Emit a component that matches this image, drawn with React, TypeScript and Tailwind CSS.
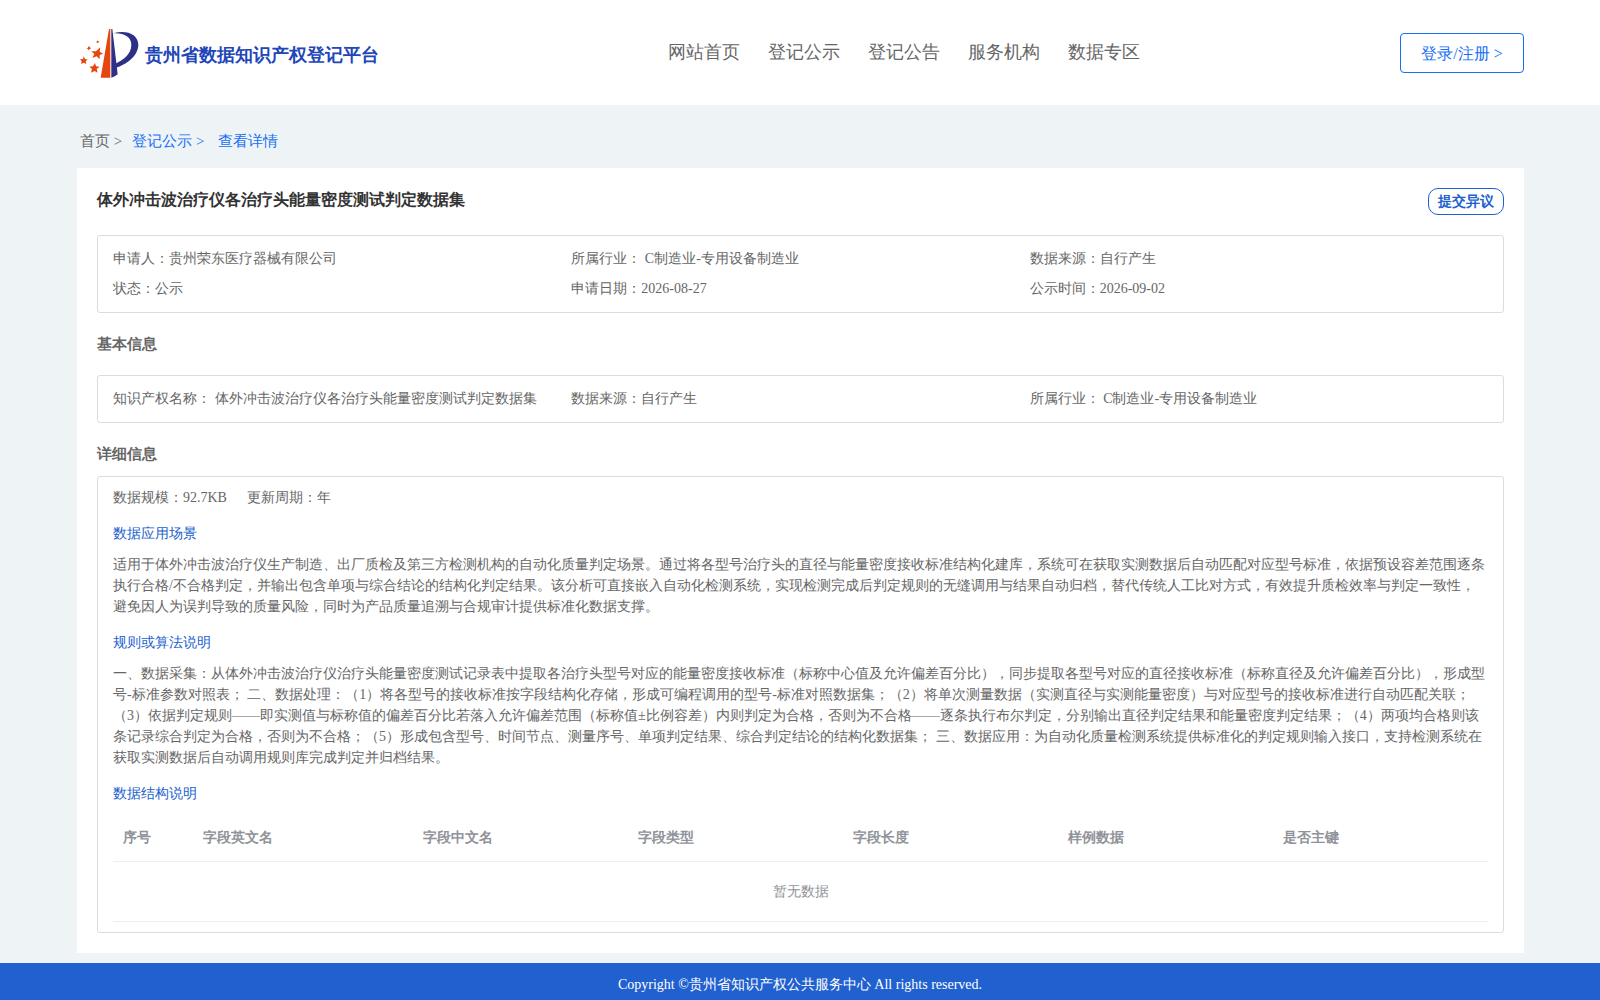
import React from 'react';

interface InfoItem {
  label: string;
  value: string;
}

const navItems = ['网站首页', '登记公示', '登记公告', '服务机构', '数据专区'];

const summary: InfoItem[] = [
  { label: '申请人：', value: '贵州荣东医疗器械有限公司' },
  { label: '所属行业： ', value: 'C制造业-专用设备制造业' },
  { label: '数据来源：', value: '自行产生' },
  { label: '状态：', value: '公示' },
  { label: '申请日期：', value: '2026-08-27' },
  { label: '公示时间：', value: '2026-09-02' },
];

const basicInfo: InfoItem[] = [
  { label: '知识产权名称： ', value: '体外冲击波治疗仪各治疗头能量密度测试判定数据集' },
  { label: '数据来源：', value: '自行产生' },
  { label: '所属行业： ', value: 'C制造业-专用设备制造业' },
];

const columns = [
  { name: '序号', width: 'w-20' },
  { name: '字段英文名', width: 'w-[220px]' },
  { name: '字段中文名', width: '' },
  { name: '字段类型', width: '' },
  { name: '字段长度', width: '' },
  { name: '样例数据', width: '' },
  { name: '是否主键', width: '' },
];

const scenario =
  '适用于体外冲击波治疗仪生产制造、出厂质检及第三方检测机构的自动化质量判定场景。通过将各型号治疗头的直径与能量密度接收标准结构化建库，系统可在获取实测数据后自动匹配对应型号标准，依据预设容差范围逐条执行合格/不合格判定，并输出包含单项与综合结论的结构化判定结果。该分析可直接嵌入自动化检测系统，实现检测完成后判定规则的无缝调用与结果自动归档，替代传统人工比对方式，有效提升质检效率与判定一致性，避免因人为误判导致的质量风险，同时为产品质量追溯与合规审计提供标准化数据支撑。';

const algorithm =
  '一、数据采集：从体外冲击波治疗仪治疗头能量密度测试记录表中提取各治疗头型号对应的能量密度接收标准（标称中心值及允许偏差百分比），同步提取各型号对应的直径接收标准（标称直径及允许偏差百分比），形成型号-标准参数对照表； 二、数据处理：（1）将各型号的接收标准按字段结构化存储，形成可编程调用的型号-标准对照数据集；（2）将单次测量数据（实测直径与实测能量密度）与对应型号的接收标准进行自动匹配关联；（3）依据判定规则——即实测值与标称值的偏差百分比若落入允许偏差范围（标称值±比例容差）内则判定为合格，否则为不合格——逐条执行布尔判定，分别输出直径判定结果和能量密度判定结果；（4）两项均合格则该条记录综合判定为合格，否则为不合格；（5）形成包含型号、时间节点、测量序号、单项判定结果、综合判定结论的结构化数据集； 三、数据应用：为自动化质量检测系统提供标准化的判定规则输入接口，支持检测系统在获取实测数据后自动调用规则库完成判定并归档结果。';

const Logo = () => (
  <svg viewBox="15 17 180 150" className="h-[50px] w-[60px]" aria-hidden="true">
    <g fill="#e5450f">
      <path d="M102 20 L106 20 L106 166 L77 166 Z" />
      <path d="M76 75 L74 88 L84 94 L74 98 L74 111 L65 102 L52 107 L58 95 L49 87 L63 87 Z" />
      <path d="M60 122 L63 132 L74 133 L65 140 L68 151 L59 146 L48 151 L51 140 L43 133 L54 132 Z" />
      <path d="M26 102 L30 110 L38 112 L32 117 L34 125 L26 121 L18 125 L20 117 L15 111 L24 110 Z" />
      <path d="M46 71 L45 76 L48 79 L44 80 L41 84 L39 80 L35 79 L39 76 L40 72 L43 74 Z" />
      <path d="M68 54 L70 57 L73 57 L70 60 L70 62 L67 61 L64 61 L66 58 L64 56 L67 56 Z" />
    </g>
    <g fill="#2c3187">
      <path d="M109 20 L112 20 L128 156 Q120 163 109 166 Z" />
      <path d="M115 33 C155 22 190 36 190 68 C189 102 153 127 122 137 L121 124 C148 111 169 94 169 67 C169 43 146 31 115 33 Z" />
    </g>
  </svg>
);

const InfoBox: React.FC<{ items: InfoItem[] }> = ({ items }) => (
  <div className="grid grid-cols-3 rounded-[3px] border border-[#dcdcdc] px-[15px] py-2">
    {items.map((item) => (
      <div key={item.label} className="text-sm leading-[30px]">
        {item.label}
        {item.value}
      </div>
    ))}
  </div>
);

const App: React.FC = () => {
  return (
    <div className="min-h-screen bg-[#eef3f6] font-['Liberation_Serif',serif] text-[#666666]">
      <header className="flex h-[105px] items-center justify-between bg-white pr-[76px] pl-20">
        <div className="flex items-center gap-[5px]">
          <Logo />
          <span className="pt-1 text-lg font-bold text-[#2146b8]">贵州省数据知识产权登记平台</span>
        </div>
        <nav className="flex gap-7 pb-[2px] pl-7 text-lg">
          {navItems.map((item) => (
            <a key={item} href="#">
              {item}
            </a>
          ))}
        </nav>
        <button className="h-10 w-[124px] rounded border border-[#176ff5] pt-[2px] text-base text-[#176ff5]">
          登录/注册 &gt;
        </button>
      </header>

      <main className="pr-[76px] pb-[10px] pl-[77px]">
        <div className="flex h-[63px] items-center px-[3px] pt-[10px] text-[15px]">
          <a href="#" className="mr-[10px]">首页 &gt;</a>
          <a href="#" className="mr-[14px] text-[#176ff5]">登记公示 &gt;</a>
          <span className="text-[#176ff5]">查看详情</span>
        </div>

        <div className="bg-white p-5">
          <div className="mb-5 flex items-start justify-between">
            <h1 className="text-base font-bold text-[#333333]">体外冲击波治疗仪各治疗头能量密度测试判定数据集</h1>
            <button className="h-[27px] rounded-[10px] border border-[#2160cf] px-[9px] text-sm font-bold text-[#2160cf]">
              提交异议
            </button>
          </div>

          <InfoBox items={summary} />
          <h2 className="py-5 text-[15px] leading-[22px] font-bold">基本信息</h2>
          <InfoBox items={basicInfo} />
          <h2 className="pt-5 pb-[11px] text-[15px] leading-[22px] font-bold">详细信息</h2>

          <section className="rounded-[3px] border border-[#dcdcdc] px-[15px] py-[10px] text-sm leading-[21px]">
            <div className="flex gap-5">
              <span>数据规模：92.7KB</span>
              <span>更新周期：年</span>
            </div>
            <h3 className="mt-[15px] mb-[10px] text-[#2160cf]">数据应用场景</h3>
            <p>{scenario}</p>
            <h3 className="mt-[15px] mb-[10px] text-[#2160cf]">规则或算法说明</h3>
            <p>{algorithm}</p>
            <h3 className="mt-[15px] mb-[10px] text-[#2160cf]">数据结构说明</h3>
            <table className="w-full table-fixed border-separate border-spacing-0 text-left text-[#909399]">
              <thead>
                <tr className="h-12">
                  {columns.map((column) => (
                    <th key={column.name} className={`border-b border-[#ebeef5] px-[10px] ${column.width}`}>
                      {column.name}
                    </th>
                  ))}
                </tr>
              </thead>
              <tbody>
                <tr className="h-[60px]">
                  <td colSpan={7} className="border-b border-[#ebeef5] text-center">暂无数据</td>
                </tr>
              </tbody>
            </table>
          </section>
        </div>
      </main>

      <footer className="h-[37px] bg-[#2160cf] pt-3 text-center text-sm text-white">
        Copyright ©贵州省知识产权公共服务中心 All rights reserved.
      </footer>
    </div>
  );
};

export default App;
